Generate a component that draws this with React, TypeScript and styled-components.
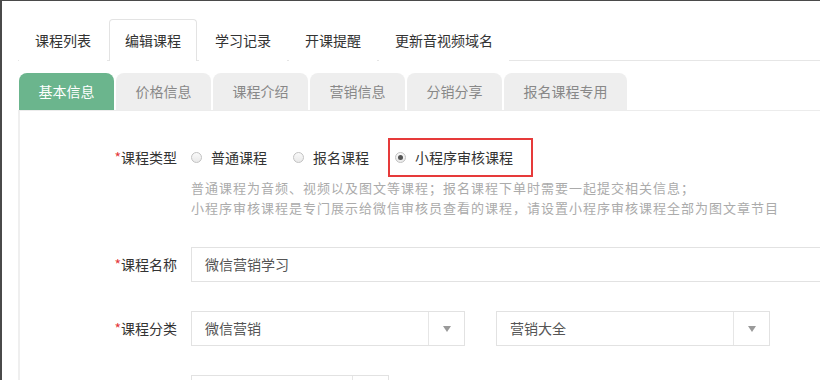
import * as React from 'react';
import styled, { createGlobalStyle } from 'styled-components';

const GlobalStyle = createGlobalStyle`
  html, body {
    margin: 0;
    padding: 0;
    background: #ffffff;
    overflow: hidden;
  }
  body {
    font-family: "Noto Sans CJK SC", "Noto Sans", sans-serif;
    color: #333333;
  }
`;

const Frame = styled.div`
  width: 820px;
  height: 380px;
  box-sizing: border-box;
  border-top: 1px solid #4a4a4a;
  border-left: 2px solid #4a4a4a;
  padding: 18px 0 0 16px;
  overflow: hidden;
`;

const TopNav = styled.ul`
  display: flex;
  margin: 0;
  padding: 0 0 0 1px;
  list-style: none;
  height: 41px;
  border-bottom: 1px solid #e6e6e6;
`;

const NavTab = styled.li<{ $active?: boolean }>`
  height: 42px;
  margin: 0 2px -1px 0;
  padding: 0 15px;
  box-sizing: border-box;
  border: 1px solid ${p => (p.$active ? '#e3e3e3' : 'transparent')};
  border-bottom: 0;
  border-radius: 4px 4px 0 0;
  background: #ffffff;
  font-size: 14px;
  line-height: 40px;
  color: #333333;
`;

const SubTabs = styled.ul`
  display: flex;
  gap: 2px;
  margin: 12px 0 0;
  padding: 0 0 0 1px;
  list-style: none;
`;

const SubTab = styled.li<{ $active?: boolean }>`
  height: 37px;
  padding: 0 19.5px;
  border-radius: 8px 8px 0 0;
  background: ${p => (p.$active ? '#6bb58d' : '#eeeeee')};
  color: ${p => (p.$active ? '#ffffff' : '#888888')};
  font-size: 14px;
  line-height: 37px;
`;

const Panel = styled.div`
  border-top: 1px solid #ececec;
  border-left: 2px solid #efefef;
  padding-top: 36px;
  height: 100%;
`;

const FormRow = styled.div`
  display: grid;
  grid-template-columns: 157px 1fr;
  column-gap: 14px;
  align-items: start;
  margin-bottom: 29px;
`;

const Label = styled.div<{ $height: number }>`
  text-align: right;
  font-size: 14px;
  line-height: ${p => p.$height}px;
  color: #333333;
`;

const Star = styled.span`
  color: #e4393c;
`;

const RadioGroup = styled.div`
  display: flex;
  align-items: center;
  height: 20px;
`;

const RadioOption = styled.label`
  position: relative;
  display: inline-flex;
  align-items: center;
  margin-right: 26px;
  font-size: 14px;
  line-height: 20px;
  color: #333333;

  &:last-child {
    margin-right: 0;
  }
`;

const RadioDot = styled.span<{ $checked?: boolean }>`
  position: relative;
  width: 11px;
  height: 11px;
  margin-right: 9px;
  box-sizing: border-box;
  border: 1px solid #c2c2c2;
  border-radius: 50%;
  background: linear-gradient(#fafafa, #e9e9e9);

  &::after {
    content: '';
    display: ${p => (p.$checked ? 'block' : 'none')};
    position: absolute;
    left: 2px;
    top: 2px;
    width: 5px;
    height: 5px;
    border-radius: 50%;
    background: #555555;
  }
`;

const Highlight = styled.span`
  position: absolute;
  top: -9px;
  bottom: -10px;
  left: -7px;
  right: -20px;
  border: 2px solid #e63a3a;
  pointer-events: none;
`;

const Helper = styled.div`
  margin-top: 11px;
  font-size: 13px;
  letter-spacing: 1px;
  line-height: 20px;
  color: #ababab;
  white-space: nowrap;
`;

const TextInput = styled.div`
  width: 660px;
  height: 35px;
  box-sizing: border-box;
  border: 1px solid #e2e2e2;
  padding: 0 13px;
  font-size: 14px;
  line-height: 33px;
  color: #555555;
`;

const SelectRow = styled.div`
  display: flex;
  gap: 31px;
`;

const Select = styled.div<{ $width: number }>`
  display: flex;
  width: ${p => p.$width}px;
  height: 35px;
  box-sizing: border-box;
  border: 1px solid #e2e2e2;
`;

const SelectValue = styled.div`
  flex: 1;
  padding-left: 13px;
  font-size: 14px;
  line-height: 33px;
  color: #555555;
`;

const SelectArrow = styled.div`
  display: flex;
  align-items: center;
  justify-content: center;
  width: 35px;
  border-left: 1px solid #e6e6e6;

  &::after {
    content: '';
    border-left: 4px solid transparent;
    border-right: 4px solid transparent;
    border-top: 6px solid #9a9a9a;
  }
`;

const navTabs = ['课程列表', '编辑课程', '学习记录', '开课提醒', '更新音视频域名'];
const subTabs = ['基本信息', '价格信息', '课程介绍', '营销信息', '分销分享', '报名课程专用'];
const courseTypes = ['普通课程', '报名课程', '小程序审核课程'];

export default function App() {
  return (
    <>
      <GlobalStyle />
      <Frame>
        <TopNav>
          {navTabs.map((t, i) => (
            <NavTab key={t} $active={i === 1}>
              {t}
            </NavTab>
          ))}
        </TopNav>
        <SubTabs>
          {subTabs.map((t, i) => (
            <SubTab key={t} $active={i === 0}>
              {t}
            </SubTab>
          ))}
        </SubTabs>
        <Panel>
          <FormRow>
            <Label $height={20}>
              <Star>*</Star>课程类型
            </Label>
            <div>
              <RadioGroup>
                {courseTypes.map((t, i) => (
                  <RadioOption key={t}>
                    <RadioDot $checked={i === 2} />
                    {t}
                    {i === 2 && <Highlight />}
                  </RadioOption>
                ))}
              </RadioGroup>
              <Helper>
                普通课程为音频、视频以及图文等课程；报名课程下单时需要一起提交相关信息；
                <br />
                小程序审核课程是专门展示给微信审核员查看的课程，请设置小程序审核课程全部为图文章节目
              </Helper>
            </div>
          </FormRow>
          <FormRow>
            <Label $height={35}>
              <Star>*</Star>课程名称
            </Label>
            <TextInput>微信营销学习</TextInput>
          </FormRow>
          <FormRow>
            <Label $height={35}>
              <Star>*</Star>课程分类
            </Label>
            <SelectRow>
              <Select $width={274}>
                <SelectValue>微信营销</SelectValue>
                <SelectArrow />
              </Select>
              <Select $width={274}>
                <SelectValue>营销大全</SelectValue>
                <SelectArrow />
              </Select>
            </SelectRow>
          </FormRow>
          <FormRow>
            <Label $height={35} />
            <Select $width={198}>
              <SelectValue />
              <SelectArrow />
            </Select>
          </FormRow>
        </Panel>
      </Frame>
    </>
  );
}
